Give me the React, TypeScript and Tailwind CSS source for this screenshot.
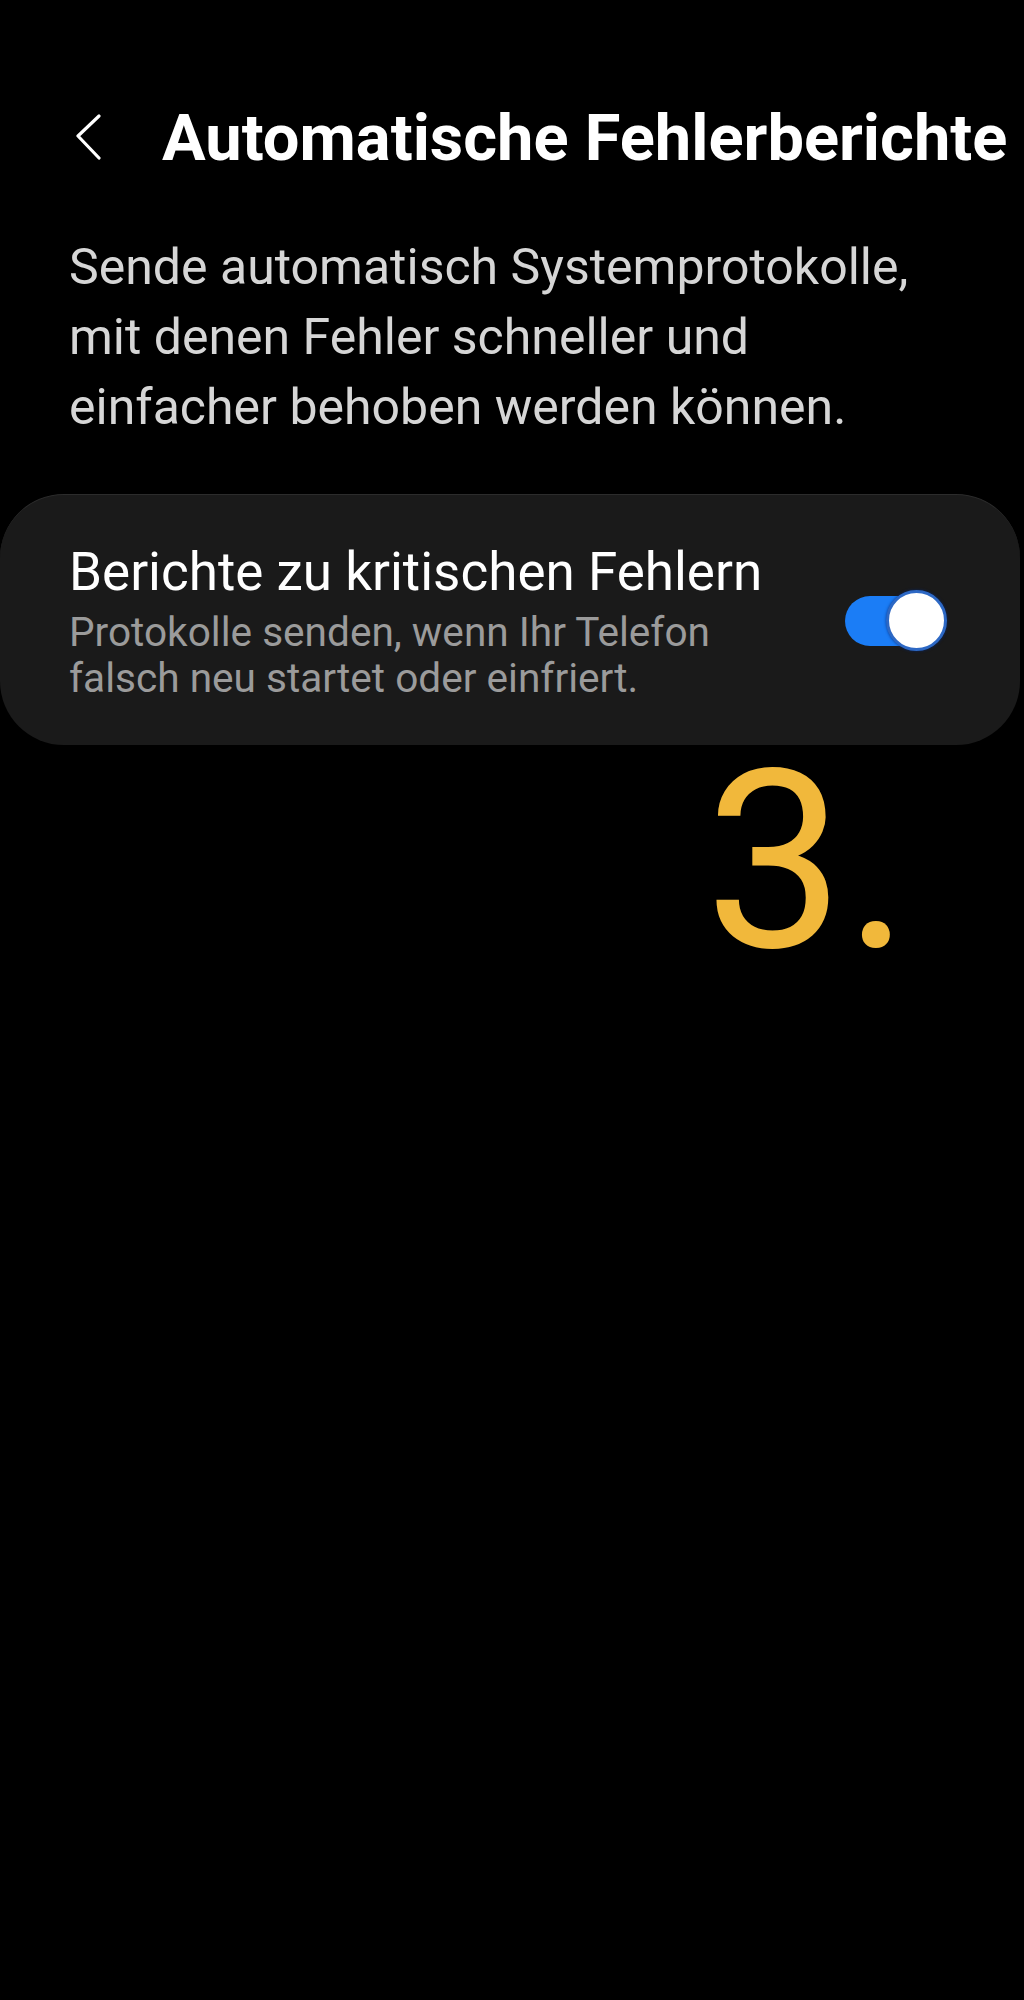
export default function App() {
  return (
    <div className="min-h-[2000px] w-full bg-black font-['Roboto',sans-serif]">
      {/* header */}
      <div className="flex items-center pt-[98px] pl-[74px]">
        <svg width="30" height="48" viewBox="0 0 30 48" className="shrink-0">
          <path d="M25 2 L4 22 L25 44" fill="none" stroke="#ffffff" strokeWidth="3.2" strokeLinecap="round" strokeLinejoin="round" />
        </svg>
        <h1 className="ml-[58px] whitespace-nowrap text-[65px] font-bold leading-[80px] text-white">
          Automatische Fehlerberichte
        </h1>
      </div>

      <p className="mt-[54px] pl-[69px] text-[50px] leading-[70px] text-[#d6d6d6]">
        Sende automatisch Systemprotokolle,
        <br />
        mit denen Fehler schneller und
        <br />
        einfacher behoben werden können.
      </p>

      {/* card */}
      <div className="mt-[52px] mr-[4px] flex items-center rounded-[64px] border-t border-[#2c2c2c] bg-[#1a1a1a] pt-[45px] pb-[44px] pl-[69px] pr-[73px]">
        <div className="flex-1">
          <div className="text-[53px] leading-[64px] text-white">Berichte zu kritischen Fehlern</div>
          <div className="mt-[5px] text-[40.6px] leading-[46px] text-[#9b9b9b]">
            Protokolle senden, wenn Ihr Telefon
            <br />
            falsch neu startet oder einfriert.
          </div>
        </div>
        <div className="relative h-[61px] w-[102px] shrink-0">
          <div className="absolute left-0 top-[6px] h-[50px] w-[90px] rounded-full bg-[#1b7df6]" />
          <div className="absolute right-0 top-0 h-[61px] w-[61px] rounded-full border-[3px] border-[#2d68c4] bg-white shadow-[0_0_3px_rgba(0,40,120,0.8)]" />
        </div>
      </div>

      <div className="mt-[14px] pl-[705px] text-[248px] leading-[208px] text-[#f1b83b]">3.</div>
    </div>
  );
}
